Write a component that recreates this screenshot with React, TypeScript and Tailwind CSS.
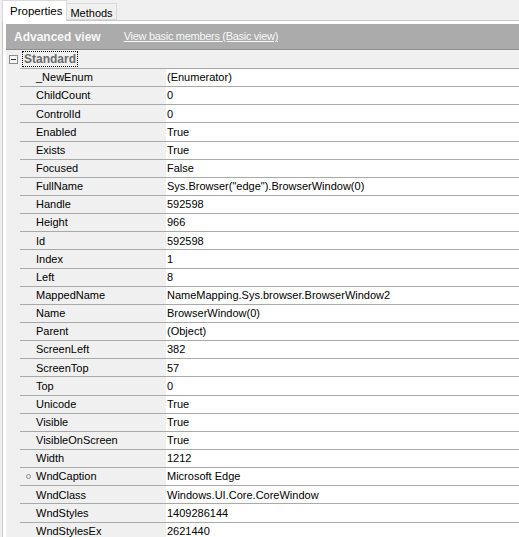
const rows: [string, string][] = [
  ['_NewEnum', '(Enumerator)'],
  ['ChildCount', '0'],
  ['ControlId', '0'],
  ['Enabled', 'True'],
  ['Exists', 'True'],
  ['Focused', 'False'],
  ['FullName', 'Sys.Browser("edge").BrowserWindow(0)'],
  ['Handle', '592598'],
  ['Height', '966'],
  ['Id', '592598'],
  ['Index', '1'],
  ['Left', '8'],
  ['MappedName', 'NameMapping.Sys.browser.BrowserWindow2'],
  ['Name', 'BrowserWindow(0)'],
  ['Parent', '(Object)'],
  ['ScreenLeft', '382'],
  ['ScreenTop', '57'],
  ['Top', '0'],
  ['Unicode', 'True'],
  ['Visible', 'True'],
  ['VisibleOnScreen', 'True'],
  ['Width', '1212'],
  ['WndCaption', 'Microsoft Edge'],
  ['WndClass', 'Windows.UI.Core.CoreWindow'],
  ['WndStyles', '1409286144'],
  ['WndStylesEx', '2621440'],
]

function PropRow({ name, value, marked }: { name: string; value: string; marked?: boolean }) {
  return (
    <div className="flex h-[18.15px]">
      <div className="w-[14px] shrink-0" />
      <div className="flex flex-1 border-b border-[#a9a9a9]">
        <div className={`flex w-[146px] shrink-0 items-center ${marked ? 'pl-[6px]' : 'pl-[16px]'}`}>
          {marked && <span className="mr-[5px] block h-[5px] w-[5px] rounded-full border border-[#8a8a8a]" />}
          {name}
        </div>
        <div className="flex flex-1 items-center bg-white pl-[1px]">{value}</div>
      </div>
    </div>
  )
}

export default function App() {
  return (
    <div className="h-[537px] w-[519px] overflow-hidden bg-[#f0f0f0] font-['Liberation_Sans',Arial,sans-serif] text-[11px] text-black">
      <div className="flex h-[20px] items-end pl-[2px]">
        <div className="relative z-10 -mb-[1px] flex h-[21px] items-start border-x border-t border-[#d9d9d9] bg-white pl-[7px] pr-[4px] pt-[2px] text-[11.5px]">
          Properties
        </div>
        <div className="flex h-[17px] items-start border-y border-r border-[#d9d9d9] bg-[#f0f0f0] pl-[3px] pr-[3px] pt-[1px] text-[11px]">
          Methods
        </div>
      </div>
      <div className="ml-[2px] border-l border-t border-[#c8c8c8] bg-white pl-[3px] pt-[3px]">
        <div className="flex h-[26px] items-center border-b border-[#8e8e8e] bg-[#ababab] text-[#f7f7f7]">
          <span className="pl-[8px] text-[12px] font-bold">Advanced view</span>
          <span className="pl-[23px] text-[11px] tracking-[-0.3px] underline">View basic members (Basic view)</span>
        </div>
        <div className="bg-[#f0f0f0]">
          <div className="flex h-[19px]">
            <div className="flex w-[14px] shrink-0 items-center pl-[3px]">
              <span className="flex h-[9px] w-[9px] items-center justify-center border border-[#8c8c8c] bg-[#f7f7f7]">
                <span className="block h-[1px] w-[5px] bg-[#333]" />
              </span>
            </div>
            <div className="flex flex-1 items-center border-b border-[#a9a9a9]">
              <span className="ml-[2px] flex h-[16px] items-center border border-dotted border-black px-[1px] text-[12px] font-bold text-[#6b6b6b]">
                Standard
              </span>
            </div>
          </div>
          {rows.map(([name, value]) => (
            <PropRow key={name} name={name} value={value} marked={name === 'WndCaption'} />
          ))}
        </div>
      </div>
    </div>
  )
}
